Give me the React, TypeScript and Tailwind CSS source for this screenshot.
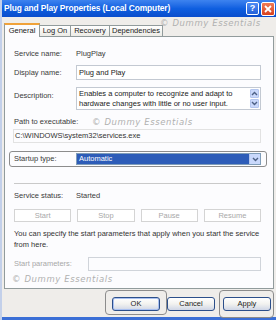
import React from "react"

const font = { fontFamily: '"Liberation Sans", Arial, sans-serif' }

function Watermark({ className }: { className: string }) {
  return (
    <div
      className={`absolute text-[8.5px] leading-[10px] tracking-[0.6px] text-[#b0b0b0] italic whitespace-nowrap pointer-events-none ${className}`}
      style={{ fontFamily: '"DejaVu Sans", sans-serif' }}
    >
      © Dummy Essentials
    </div>
  )
}

function Chevron({ up }: { up?: boolean }) {
  return (
    <svg width="7" height="5" viewBox="0 0 7 5">
      <path
        d={up ? "M1 4 L3.5 1.5 L6 4" : "M1 1 L3.5 3.5 L6 1"}
        fill="none"
        stroke="#4d6185"
        strokeWidth="1.4"
      />
    </svg>
  )
}

function DlgButton({ label, focused }: { label: string; focused?: boolean }) {
  return (
    <div
      className={`w-[48px] h-[14px] rounded-[3px] border border-[#2c4f8a] bg-gradient-to-b from-white via-[#f2f2ef] to-[#cfd6e6] flex items-center justify-center text-[7.5px] text-[#222] ${
        focused ? "shadow-[inset_0_0_0_1px_#a9c0f0]" : ""
      }`}
    >
      {label}
    </div>
  )
}

export default function App() {
  return (
    <div
      className="relative w-[276px] h-[320px] flex flex-col bg-[#efedea] border-l-2 border-[#c3d0ea] overflow-hidden"
      style={font}
    >
      {/* Title bar */}
      <div className="h-[17px] shrink-0 flex items-center justify-between pl-[2px] pr-[1px] bg-gradient-to-b from-[#3d83ef] via-[#0f5fe0] to-[#0a4dcc]">
        <span className="text-white font-bold text-[8.4px] tracking-[-0.1px] whitespace-nowrap">
          Plug and Play Properties (Local Computer)
        </span>
        <div className="flex gap-[2px]">
          <div className="w-[13px] h-[13px] rounded-[2px] border border-white bg-gradient-to-b from-[#4f8df5] to-[#2460d8] flex items-center justify-center text-white font-bold text-[9px] leading-none">
            ?
          </div>
          <div className="w-[14px] h-[14px] rounded-[2px] border border-white bg-gradient-to-b from-[#f07a55] to-[#d8401c] flex items-center justify-center">
            <svg width="8" height="8" viewBox="0 0 8 8">
              <path d="M1 1 L7 7 M7 1 L1 7" stroke="white" strokeWidth="1.8" />
            </svg>
          </div>
        </div>
      </div>

      <div className="relative flex-1 flex flex-col px-[2px] pt-[6px]">
        {/* Tabs */}
        <div className="h-[13px] flex items-end text-[7.5px] text-[#222]">
          <div className="relative z-10 h-[14px] -mb-[1px] w-[36px] bg-[#fcfcfe] border border-b-0 border-[#919b9c] border-t-2 border-t-[#f0a23a] flex items-center justify-center">
            General
          </div>
          <div className="h-[11px] w-[31px] bg-gradient-to-b from-white to-[#ecebe6] border border-b-0 border-l-0 border-[#919b9c] flex items-center justify-center">
            Log On
          </div>
          <div className="h-[11px] w-[39px] bg-gradient-to-b from-white to-[#ecebe6] border border-b-0 border-l-0 border-[#919b9c] flex items-center justify-center">
            Recovery
          </div>
          <div className="h-[11px] w-[53px] bg-gradient-to-b from-white to-[#ecebe6] border border-b-0 border-l-0 border-[#919b9c] flex items-center justify-center">
            Dependencies
          </div>
        </div>

        {/* Panel */}
        <div className="h-[253px] border border-[#919b9c] bg-[#fcfcfe] pl-[9px] pr-[12px] pt-[12px] flex flex-col text-[7.5px] text-[#3a3a3a]">
          <div className="h-[10px] flex items-center">
            <span className="w-[62px]">Service name:</span>
            <span>PlugPlay</span>
          </div>

          <div className="mt-[6px] h-[15px] flex items-center">
            <span className="w-[62px]">Display name:</span>
            <div className="flex-1 h-full border border-[#c3c9d2] bg-white px-[2px] flex items-center text-[#222]">
              Plug and Play
            </div>
          </div>

          <div className="mt-[7px] h-[23px] flex">
            <span className="w-[62px] pt-[3px]">Description:</span>
            <div className="flex-1 h-full border border-[#c3c9d2] bg-white pl-[2px] pr-[1px] flex justify-between text-[#222]">
              <div className="leading-[10px] pt-[1px]">
                Enables a computer to recognize and adapt to
                <br />
                hardware changes with little or no user input.
              </div>
              <div className="flex flex-col gap-[1px] pt-[1px]">
                <div className="w-[9px] h-[9px] rounded-[1px] bg-[#c9d8fb] border border-[#b4c6ee] flex items-center justify-center">
                  <Chevron up />
                </div>
                <div className="w-[9px] h-[9px] rounded-[1px] bg-[#c9d8fb] border border-[#b4c6ee] flex items-center justify-center">
                  <Chevron />
                </div>
              </div>
            </div>
          </div>

          <div className="mt-[7px] h-[10px] flex items-center">Path to executable:</div>
          <div className="mt-[2px] h-[14px] -ml-[1px] border border-[#e2e2e2] pl-[1px] flex items-center text-[#333]">
            C:\WINDOWS\system32\services.exe
          </div>

          <div className="mt-[8px] h-[16px] -ml-[5px] -mr-[6px] rounded-[3px] border border-[#8c8c8c] pl-[4px] pr-[5px] flex items-center">
            <span className="w-[62px]">Startup type:</span>
            <div className="flex-1 h-[12px] border border-[#7f9db9] bg-white flex items-stretch">
              <div className="flex-1 bg-[#2d5cb8] text-white pl-[2px] flex items-center">Automatic</div>
              <div className="w-[11px] bg-[#c9d8fb] border-l border-[#b4c6ee] flex items-center justify-center">
                <Chevron />
              </div>
            </div>
          </div>

          <div className="mt-[16px] border-t border-[#c9c9c9]" />

          <div className="mt-[7px] h-[10px] flex items-center">
            <span className="w-[62px]">Service status:</span>
            <span>Started</span>
          </div>

          <div className="mt-[8px] h-[13px] grid grid-cols-4 gap-[6px] text-[#a8a8a8]">
            {["Start", "Stop", "Pause", "Resume"].map((b) => (
              <div key={b} className="border border-[#d4d4d4] bg-white flex items-center justify-center">
                {b}
              </div>
            ))}
          </div>

          <div className="mt-[6px] leading-[11px] text-[#333] whitespace-nowrap">
            You can specify the start parameters that apply when you start the service
            <br />
            from here.
          </div>

          <div className="mt-[7px] h-[14px] flex items-center">
            <span className="w-[74px] text-[#a8a8a8]">Start parameters:</span>
            <div className="flex-1 h-full border border-[#d0d4da] bg-[#fcfcfe]" />
          </div>

          <div className="relative mt-[3px] h-[10px]">
            <Watermark className="-left-[2px] top-0" />
          </div>
        </div>

        {/* Dialog buttons */}
        <div className="mt-[8px] flex justify-end pr-[3px] gap-[7px]">
          <div className="relative">
            <DlgButton label="OK" focused />
            <div className="absolute -left-[7px] -right-[7px] -top-[7px] -bottom-[4px] rounded-[4px] border border-[#8c8c8c]" />
          </div>
          <DlgButton label="Cancel" />
          <div className="relative ml-[1px]">
            <DlgButton label="Apply" />
            <div className="absolute -left-[4px] -right-[3px] -top-[7px] -bottom-[7px] rounded-[4px] border border-[#8c8c8c]" />
          </div>
        </div>

        <Watermark className="left-[158px] top-[1px]" />
        <Watermark className="left-[90px] top-[100px]" />
      </div>

      <div className="h-[3px] shrink-0 bg-[#3b6fd6]" />
    </div>
  )
}
